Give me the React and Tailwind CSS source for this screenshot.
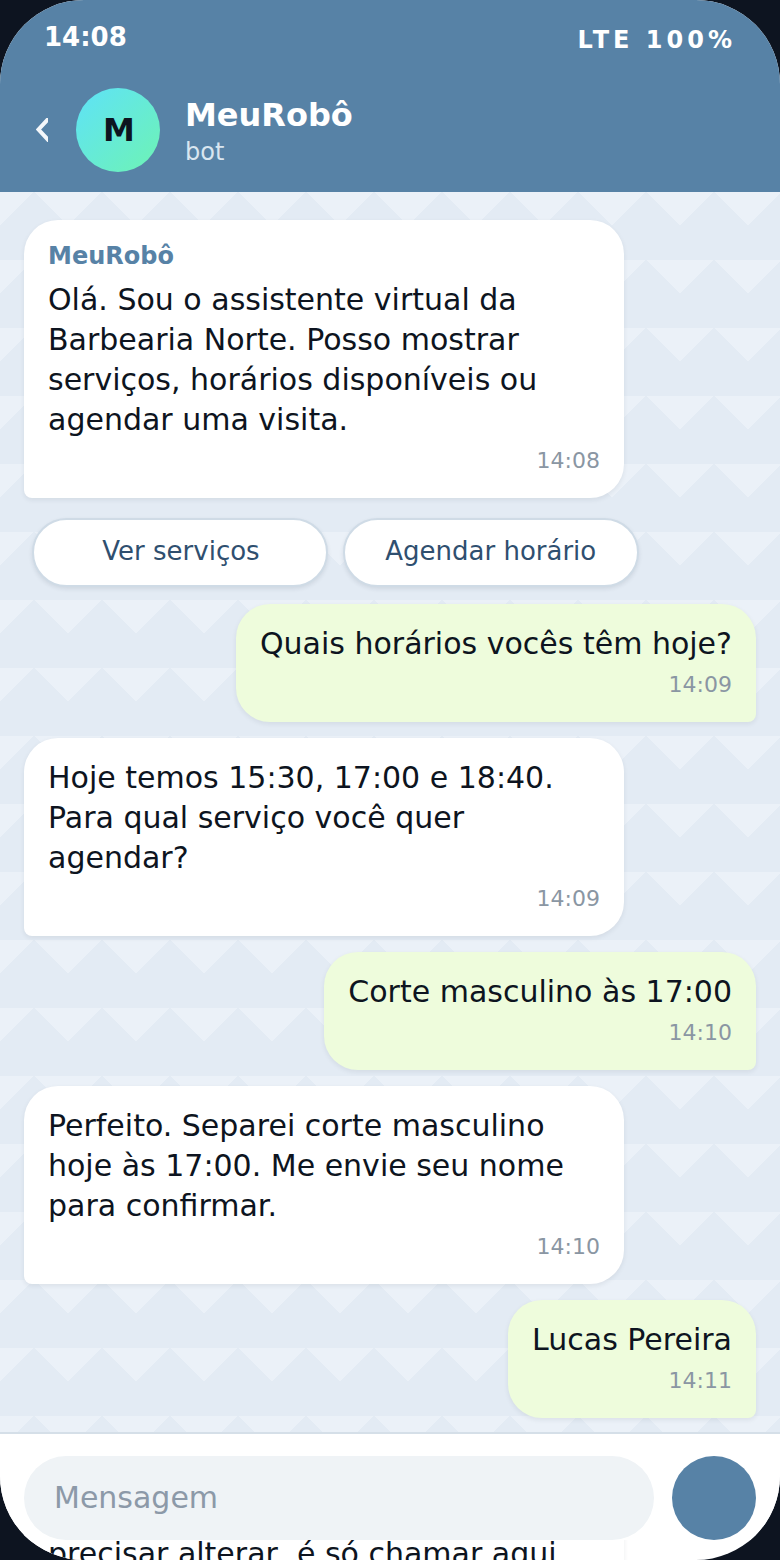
function Bot({ name, time, children }) {
  return (
    <div className="w-[600px] shrink-0 self-start rounded-[34px] rounded-bl-lg bg-white px-6 pt-5 pb-[22px] shadow-[0_2px_5px_rgba(31,41,55,0.08)]">
      {name && <div className="mt-[2px] mb-[10px] text-[24px] leading-[28px] font-bold text-[#5782a6]">{name}</div>}
      <div className="text-[30px] leading-[40px] text-[#0d1420]">{children}</div>
      <div className="mt-[6px] text-right text-[22px] leading-[30px] text-[#8a96a3]">{time}</div>
    </div>
  );
}

function Me({ time, children }) {
  return (
    <div className="shrink-0 self-end rounded-[34px] rounded-br-lg bg-[#eefcdc] px-6 pt-5 pb-[22px] shadow-[0_2px_5px_rgba(31,41,55,0.08)]">
      <div className="text-[30px] leading-[40px] text-[#0d1420]">{children}</div>
      <div className="mt-[6px] text-right text-[22px] leading-[30px] text-[#8a96a3]">{time}</div>
    </div>
  );
}

export default function App() {
  const chip =
    "h-[69px] rounded-[35px] border-2 border-[#cfdbe6] bg-white pb-[3px] text-[26px] text-[#2f4f6f] shadow-[0_2px_4px_rgba(31,41,55,0.1)]";

  return (
    <div className="h-[1560px] w-[780px] overflow-hidden bg-[#0d1420] font-['DejaVu_Sans',sans-serif]">
      <div className="flex h-[1560px] flex-col overflow-hidden rounded-[84px] bg-white">
        <header className="h-[192px] shrink-0 bg-[#5782a6] text-white">
          <div className="flex items-start justify-between pt-[21px] pr-[44px] pl-[44px]">
            <span className="text-[26px] leading-[32px] font-bold">14:08</span>
            <span className="mt-[3px] text-[24px] leading-[32px] font-bold tracking-[4px]">LTE 100%</span>
          </div>
          <div className="mt-[32px] flex items-center pl-[36px]">
            <svg width="12" height="24" viewBox="0 0 12 24" fill="none" stroke="#f4f7fa" strokeWidth="4" className="shrink-0">
              <path d="M14 -1 L2.5 11.5 L14 24" />
            </svg>
            <div className="ml-[28px] flex h-[84px] w-[84px] items-center justify-center rounded-full bg-[linear-gradient(135deg,#5ee2f8,#6ef3b4)] pl-[2px] text-[32px] font-bold text-[#0d1420]">
              M
            </div>
            <div className="ml-[25px] pt-[2px]">
              <div className="text-[32px] leading-[40px] font-bold">MeuRobô</div>
              <div className="mt-[2px] text-[24px] leading-[30px] text-[#d9e6f0]">bot</div>
            </div>
          </div>
        </header>

        <main className="flex h-[1240px] shrink-0 flex-col gap-4 bg-[#e3ebf4] bg-[linear-gradient(135deg,#ebf1f8_25%,transparent_25%),linear-gradient(225deg,#ebf1f8_25%,transparent_25%)] bg-size-[68px_68px] px-6 pt-7">
          <Bot name="MeuRobô" time="14:08">
            Olá. Sou o assistente virtual da Barbearia Norte. Posso mostrar serviços, horários disponíveis ou agendar uma visita.
          </Bot>
          <div className="mt-1 mb-[1px] flex shrink-0 gap-[14.5px] pl-2">
            <button className={`w-[296px] pl-[2px] ${chip}`}>Ver serviços</button>
            <button className={`w-[296.5px] ${chip}`}>Agendar horário</button>
          </div>
          <Me time="14:09">Quais horários vocês têm hoje?</Me>
          <Bot time="14:09">Hoje temos 15:30, 17:00 e 18:40. Para qual serviço você quer agendar?</Bot>
          <Me time="14:10">Corte masculino às 17:00</Me>
          <Bot time="14:10">Perfeito. Separei corte masculino hoje às 17:00. Me envie seu nome para confirmar.</Bot>
          <Me time="14:11">Lucas Pereira</Me>
          <Bot time="14:11">Agendamento confirmado, Lucas. Corte masculino hoje às 17:00. Se precisar alterar, é só chamar aqui</Bot>
        </main>

        <footer className="h-[108px] shrink-0 border-t-2 border-[#d5dfe8] bg-white/95">
          <div className="flex items-center gap-[18px] px-6 pt-[22px]">
            <div className="flex h-[84px] flex-1 items-center rounded-[42px] bg-[#eff3f6] px-[30px] pb-[2px] text-[30px] text-[#8c99a8]">
              Mensagem
            </div>
            <button className="h-[84px] w-[84px] shrink-0 rounded-full bg-[#5782a6]"></button>
          </div>
        </footer>
      </div>
    </div>
  );
}
